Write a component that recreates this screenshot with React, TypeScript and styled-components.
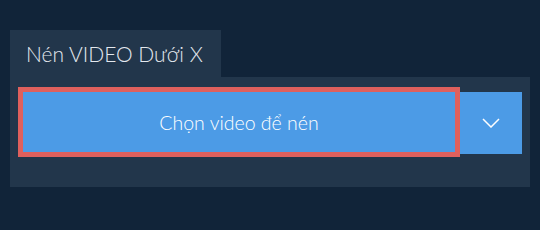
import { createGlobalStyle, styled } from "styled-components";

const GlobalStyle = createGlobalStyle`
  html, body {
    margin: 0;
    padding: 0;
    background-color: #112439;
    font-family: Lato, "Liberation Sans", sans-serif;
  }
`;

const Page = styled.div`
  padding: 30px 10px 0 10px;
  width: 520px;
  height: 200px;
`;

const Tab = styled.div`
  display: inline-flex;
  align-items: center;
  height: 47px;
  padding: 0 16px;
  width: 211px;
  box-sizing: border-box;
  background-color: #22364b;
  color: #e3e8ee;
  font-size: 21px;
  font-weight: 300;
`;

const Panel = styled.div`
  display: flex;
  align-items: flex-start;
  padding: 10px 8px 30px 8px;
  background-color: #22364b;
`;

const MainButton = styled.button`
  flex: 1;
  height: 70px;
  border: 5px solid #df605d;
  background-color: #4c9be6;
  color: #ffffff;
  font-family: inherit;
  font-size: 19.5px;
  font-weight: 300;
  cursor: pointer;
`;

const DropdownButton = styled.button`
  display: flex;
  align-items: center;
  justify-content: center;
  width: 62px;
  height: 62px;
  margin-top: 5px;
  border: none;
  background-color: #4c9be6;
  cursor: pointer;
`;

function Chevron() {
  return (
    <svg width="18" height="10" viewBox="0 0 18 10" fill="none">
      <path d="M1 1 L9 9 L17 1" stroke="#ffffff" strokeWidth="1.5" />
    </svg>
  );
}

function App() {
  return (
    <>
      <GlobalStyle />
      <Page>
        <Tab>Nén VIDEO Dưới X</Tab>
        <Panel>
          <MainButton>Chọn video để nén</MainButton>
          <DropdownButton>
            <Chevron />
          </DropdownButton>
        </Panel>
      </Page>
    </>
  );
}

export default App;
